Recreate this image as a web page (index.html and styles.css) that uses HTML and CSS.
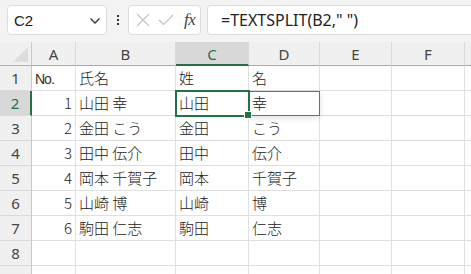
FILE: index.html
```html
<!DOCTYPE html>
<html lang="ja">
<head>
<meta charset="utf-8">
<link rel="stylesheet" href="styles.css">
</head>
<body>
<div class="toolbar">
  <div class="namebox">
    <span class="ref">C2</span>
    <svg class="chev" width="12" height="8" viewBox="0 0 12 8"><path d="M1.5 1.5 L6 6 L10.5 1.5" fill="none" stroke="#333" stroke-width="1.3"/></svg>
  </div>
  <div class="dots"><i></i><i></i><i></i></div>
  <div class="fbtns">
    <svg width="14" height="14" viewBox="0 0 14 14"><path d="M1 1 L13 13 M13 1 L1 13" stroke="#c4c4c4" stroke-width="1.2"/></svg>
    <svg width="16" height="12" viewBox="0 0 16 12"><path d="M1 6 L5.5 10.5 L15 1" fill="none" stroke="#c4c4c4" stroke-width="1.2"/></svg>
    <span class="fx">fx</span>
  </div>
  <div class="formula">=TEXTSPLIT(B2," ")</div>
</div>
<div class="sheet">
  <div class="corner"><span class="tri"></span></div>
  <div class="ch">A</div><div class="ch">B</div><div class="ch active">C</div><div class="ch">D</div><div class="ch">E</div><div class="ch">F</div><div class="ch"></div>

  <div class="rh">1</div><div class="c"><span class="no">No.</span></div><div class="c">氏名</div><div class="c">姓</div><div class="c">名</div><div class="c"></div><div class="c"></div><div class="c"></div>
  <div class="rh active">2</div><div class="c num">1</div><div class="c">山田 幸</div><div class="c sel">山田<span class="handle"></span></div><div class="c spill">幸</div><div class="c"></div><div class="c"></div><div class="c"></div>
  <div class="rh">3</div><div class="c num">2</div><div class="c">金田 こう</div><div class="c">金田</div><div class="c">こう</div><div class="c"></div><div class="c"></div><div class="c"></div>
  <div class="rh">4</div><div class="c num">3</div><div class="c">田中 伝介</div><div class="c">田中</div><div class="c">伝介</div><div class="c"></div><div class="c"></div><div class="c"></div>
  <div class="rh">5</div><div class="c num">4</div><div class="c">岡本 千賀子</div><div class="c">岡本</div><div class="c">千賀子</div><div class="c"></div><div class="c"></div><div class="c"></div>
  <div class="rh">6</div><div class="c num">5</div><div class="c">山崎 博</div><div class="c">山崎</div><div class="c">博</div><div class="c"></div><div class="c"></div><div class="c"></div>
  <div class="rh">7</div><div class="c num">6</div><div class="c">駒田 仁志</div><div class="c">駒田</div><div class="c">仁志</div><div class="c"></div><div class="c"></div><div class="c"></div>
  <div class="rh">8</div><div class="c"></div><div class="c"></div><div class="c"></div><div class="c"></div><div class="c"></div><div class="c"></div><div class="c"></div>
  <div class="rh">9</div><div class="c"></div><div class="c"></div><div class="c"></div><div class="c"></div><div class="c"></div><div class="c"></div><div class="c"></div>
</div>
</body>
</html>
```
FILE: styles.css
```css
html, body {
  margin: 0;
  padding: 0;
  background: #ffffff;
  overflow: hidden;
  width: 471px;
  height: 274px;
}
body {
  font-family: "Noto Sans CJK JP", "Noto Sans", sans-serif;
  color: #222;
}
.toolbar {
  height: 42px;
  box-sizing: border-box;
  background: #f3f3f3;
  display: flex;
  align-items: flex-start;
  padding: 5px 0 0 7px;
}
.namebox {
  width: 100px;
  height: 30px;
  box-sizing: border-box;
  background: #fff;
  border: 1px solid #dcdcdc;
  border-radius: 4px;
  display: flex;
  align-items: center;
  justify-content: space-between;
  padding: 0 5px 0 6px;
}
.ref {
  font-family: "Liberation Sans", Arial, sans-serif;
  font-size: 15px;
  color: #222;
}
.chev { margin-top: 1px; }
.dots {
  width: 21px;
  height: 30px;
  display: flex;
  flex-direction: column;
  align-items: center;
  justify-content: center;
  gap: 2px;
}
.dots i {
  width: 2px;
  height: 2px;
  background: #333;
  display: block;
}
.fbtns {
  width: 73px;
  height: 30px;
  box-sizing: border-box;
  background: #fff;
  border: 1px solid #dcdcdc;
  border-radius: 4px;
  display: flex;
  align-items: center;
  padding: 0 4px 0 7px;
  gap: 8px;
}
.fx {
  font-family: "Liberation Serif", "DejaVu Serif", serif;
  font-style: italic;
  font-size: 17px;
  color: #444;
  margin-left: 2px;
  letter-spacing: -0.5px;
}
.formula {
  flex: 1;
  margin-left: 6px;
  height: 30px;
  box-sizing: border-box;
  background: #fff;
  border: 1px solid #dcdcdc;
  border-right: none;
  border-radius: 4px 0 0 4px;
  font-family: "Noto Sans", "Liberation Sans", sans-serif;
  font-size: 16px;
  line-height: 28px;
  padding-left: 13px;
  color: #222;
  white-space: nowrap;
}
.sheet {
  display: grid;
  grid-template-columns: 32px 44px 100px 73px 71px 72px 73px 1fr;
  grid-template-rows: 24px repeat(9, 25px);
}
.corner {
  background: #f0f0f0;
  border-right: 1px solid #c8c8c8;
  border-bottom: 1px solid #b0b0b0;
  box-sizing: border-box;
  position: relative;
}
.tri {
  position: absolute;
  right: 3px;
  bottom: 3px;
  width: 0;
  height: 0;
  border-left: 15px solid transparent;
  border-bottom: 15px solid #dcdcdc;
}
.ch {
  background: #f0f0f0;
  border-right: 1px solid #dadada;
  border-bottom: 1px solid #aaaaaa;
  box-sizing: border-box;
  text-align: center;
  font-family: "Noto Sans", "Liberation Sans", sans-serif;
  font-size: 15px;
  line-height: 25px;
  color: #444;
}
.ch.active {
  background: #d8d8d8;
  color: #217346;
  border-bottom: 2px solid #217346;
}
.rh {
  background: #f0f0f0;
  border-right: 1px solid #c8c8c8;
  border-bottom: 1px solid #dadada;
  box-sizing: border-box;
  text-align: center;
  font-family: "Noto Sans", "Liberation Sans", sans-serif;
  font-size: 15px;
  line-height: 24px;
  color: #444;
}
.rh.active {
  background: #d8d8d8;
  color: #217346;
  border-right: 2px solid #217346;
}
.c {
  border-right: 1px solid #e0e0e0;
  border-bottom: 1px solid #e0e0e0;
  box-sizing: border-box;
  font-size: 15px;
  font-weight: 300;
  line-height: 24px;
  padding: 0 3px;
  white-space: nowrap;
  overflow: visible;
  color: #222;
  position: relative;
}
.no {
  font-family: "Liberation Sans Narrow", "Liberation Sans", sans-serif;
  font-size: 14px;
  letter-spacing: -1px;
  color: #333;
}
.c.num { text-align: right; }
.c.sel {
  outline: 2px solid #217346;
  outline-offset: -1px;
  z-index: 2;
}
.handle {
  position: absolute;
  right: -4px;
  bottom: -4px;
  width: 6px;
  height: 6px;
  background: #217346;
  border: 1px solid #fff;
  box-sizing: content-box;
}
.c.spill {
  outline: 1px solid #3b74d0;
  outline-offset: -1px;
  box-shadow: 0 2px 6px rgba(0,0,0,0.12);
  z-index: 1;
}
```
